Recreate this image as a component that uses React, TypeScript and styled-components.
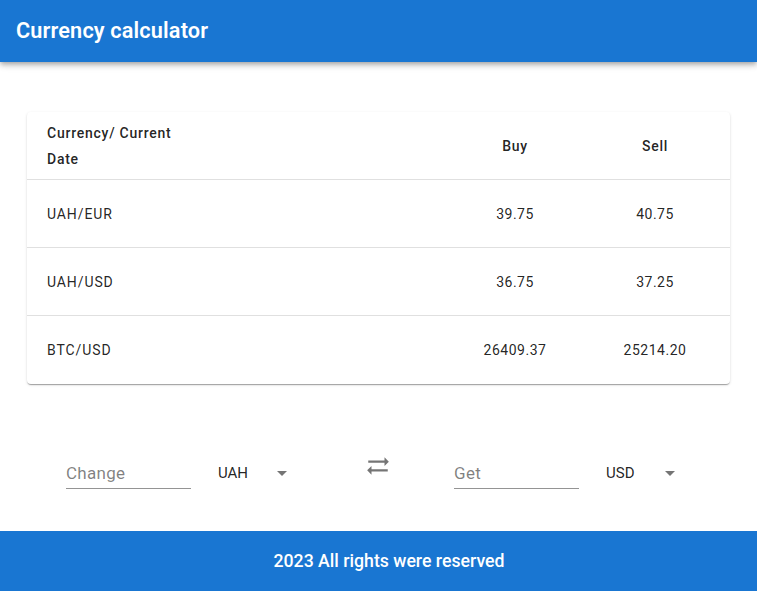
import React from 'react';
import styled, { createGlobalStyle } from 'styled-components';

const GlobalStyle = createGlobalStyle`
  * { box-sizing: border-box; }
  body {
    margin: 0;
    background: #fff;
    font-family: Roboto, 'Liberation Sans', sans-serif;
    color: rgba(0, 0, 0, 0.87);
  }
`;

const Page = styled.div`
  display: flex;
  flex-direction: column;
  min-height: 591px;
`;

const Header = styled.header`
  height: 62px;
  background: #1976d2;
  display: flex;
  align-items: center;
  padding: 0 16px 2px;
  box-shadow: 0 2px 4px -1px rgba(0,0,0,0.2), 0 4px 5px 0 rgba(0,0,0,0.14), 0 1px 10px 0 rgba(0,0,0,0.12);
  position: relative;
  z-index: 1;
`;

const Title = styled.h1`
  margin: 0;
  color: #fff;
  font-size: 21.7px;
  font-weight: 600;
  letter-spacing: 0.15px;
`;

const Main = styled.main`
  flex: 1;
  padding: 50px 27px 0;
`;

const Card = styled.div`
  background: #fff;
  border-radius: 4px;
  box-shadow: 0 2px 1px -1px rgba(0,0,0,0.2), 0 1px 1px 0 rgba(0,0,0,0.14), 0 1px 3px 0 rgba(0,0,0,0.12);
  overflow: hidden;
`;

const Row = styled.div<{ $last?: boolean }>`
  display: grid;
  grid-template-columns: 1fr 140px 140px;
  padding-right: 5px;
  height: 68px;
  align-items: center;
  border-bottom: ${p => (p.$last ? 'none' : '1px solid rgb(224,224,224)')};
  font-size: 14px;
`;

const Cell = styled.div<{ $head?: boolean; $num?: boolean }>`
  padding-left: ${p => (p.$num ? '0' : '20px')};
  text-align: ${p => (p.$num ? 'center' : 'left')};
  font-weight: ${p => (p.$head ? 500 : 400)};
  letter-spacing: ${p => (p.$head ? '0.75px' : p.$num ? '0.5px' : '0.9px')};
  line-height: 26px;
`;

const HeadLabel = styled.span`
  display: block;
  max-width: 140px;
`;

const Converter = styled.div`
  display: flex;
  align-items: center;
  height: 32px;
  margin: 73px 0 42px;
  padding-left: 39px;
`;

const Group = styled.div`
  display: flex;
  align-items: center;
  gap: 27px;
`;

const Field = styled.div`
  width: 125px;
  height: 32px;
  border-bottom: 1px solid rgba(0,0,0,0.42);
  display: flex;
  align-items: center;
  padding-top: 1px;
`;

const Input = styled.input`
  border: none;
  outline: none;
  background: transparent;
  width: 100%;
  padding: 0;
  font-family: inherit;
  font-size: 17px;
  letter-spacing: 0.3px;
  color: rgba(0,0,0,0.87);
  &::placeholder { color: rgba(0,0,0,0.5); }
`;

const Select = styled.div`
  width: 76px;
  display: flex;
  align-items: center;
  justify-content: space-between;
  font-size: 15px;
  color: rgba(0,0,0,0.87);
`;

const Swap = styled.div`
  width: 26px;
  height: 26px;
  margin: 0 63px 14px 71px;
  color: rgba(0,0,0,0.54);
  display: flex;
`;

const Footer = styled.footer`
  height: 60px;
  background: #1976d2;
  color: #fff;
  display: flex;
  align-items: center;
  justify-content: center;
  padding-left: 21px;
  font-size: 17.7px;
  font-weight: 500;
`;

const rows = [
  { pair: 'UAH/EUR', buy: '39.75', sell: '40.75' },
  { pair: 'UAH/USD', buy: '36.75', sell: '37.25' },
  { pair: 'BTC/USD', buy: '26409.37', sell: '25214.20' },
];

const Arrow = () => (
  <svg width="24" height="24" viewBox="0 0 24 24" fill="rgba(0,0,0,0.54)">
    <path d="M7 10l5 5 5-5z" />
  </svg>
);

const CurrencySelect = ({ value }: { value: string }) => (
  <Select>
    <span>{value}</span>
    <Arrow />
  </Select>
);

export default function App() {
  return (
    <>
      <GlobalStyle />
      <Page>
        <Header>
          <Title>Currency calculator</Title>
        </Header>
        <Main>
          <Card>
            <Row>
              <Cell $head>
                <HeadLabel>Currency/ Current Date</HeadLabel>
              </Cell>
              <Cell $head $num>Buy</Cell>
              <Cell $head $num>Sell</Cell>
            </Row>
            {rows.map((r, i) => (
              <Row key={r.pair} $last={i === rows.length - 1}>
                <Cell>{r.pair}</Cell>
                <Cell $num>{r.buy}</Cell>
                <Cell $num>{r.sell}</Cell>
              </Row>
            ))}
          </Card>
          <Converter>
            <Group>
              <Field>
                <Input placeholder="Change" />
              </Field>
              <CurrencySelect value="UAH" />
            </Group>
            <Swap>
              <svg width="26" height="26" viewBox="0 0 24 24" fill="currentColor">
                <path d="M18 12l4-4-4-4v3H3v2h15zM6 12l-4 4 4 4v-3h15v-2H6z" />
              </svg>
            </Swap>
            <Group>
              <Field>
                <Input placeholder="Get" />
              </Field>
              <CurrencySelect value="USD" />
            </Group>
          </Converter>
        </Main>
        <Footer>2023 All rights were reserved</Footer>
      </Page>
    </>
  );
}
